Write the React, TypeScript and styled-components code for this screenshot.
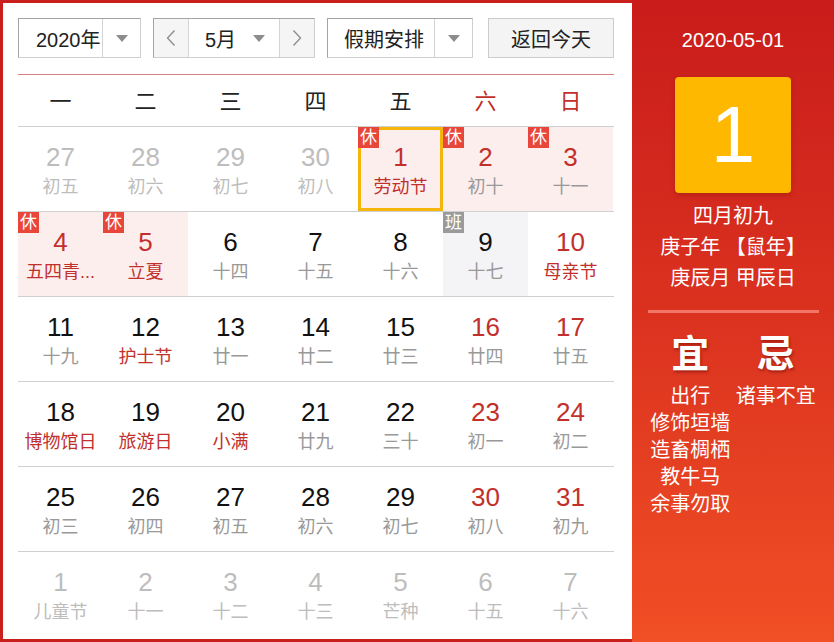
import React from "react";
import styled, { createGlobalStyle, css } from "styled-components";

const GlobalStyle = createGlobalStyle`
  html, body {
    margin: 0;
    padding: 0;
    background: #fff;
  }
  body {
    font-family: "Liberation Sans", "Noto Sans CJK SC", sans-serif;
  }
`;

const Frame = styled.div`
  width: 834px;
  height: 642px;
  box-sizing: border-box;
  padding: 3px 0 3px 3px;
  background: #c9201e;
  display: flex;
`;

const Main = styled.div`
  width: 629px;
  background: #fff;
  box-sizing: border-box;
  padding: 15px 18px 0 15px;
  display: flex;
  flex-direction: column;
`;

const Toolbar = styled.div`
  height: 40px;
  display: flex;
  align-items: stretch;
`;

const SelectBox = styled.div<{ $width: number; $gap?: number }>`
  width: ${(p) => p.$width}px;
  margin-right: ${(p) => p.$gap ?? 0}px;
  box-sizing: border-box;
  border: 1px solid #cfcfcf;
  border-top-color: #a4a4a4;
  border-left-color: #a4a4a4;
  background: #fff;
  display: flex;
  align-items: stretch;
  font-size: 20px;
  color: #222;
`;

const SelectLabel = styled.div<{ $pad: number }>`
  flex: 1;
  display: flex;
  align-items: center;
  padding-left: ${(p) => p.$pad}px;
  white-space: nowrap;
`;

const ArrowCell = styled.div<{ $width: number }>`
  width: ${(p) => p.$width}px;
  border-left: 1px solid #d4d4d4;
  display: flex;
  align-items: center;
  justify-content: center;
`;

const Caret = styled.span`
  width: 0;
  height: 0;
  border-left: 6px solid transparent;
  border-right: 6px solid transparent;
  border-top: 7px solid #8c8c8c;
`;

const StepButton = styled.div<{ $side: "left" | "right" }>`
  width: 34px;
  background: #f5f5f5;
  display: flex;
  align-items: center;
  justify-content: center;
  ${(p) =>
    p.$side === "left"
      ? css`border-right: 1px solid #d4d4d4;`
      : css`border-left: 1px solid #d4d4d4;`}
`;

const MonthLabel = styled.div`
  flex: 1;
  display: flex;
  align-items: center;
  justify-content: space-between;
  padding: 0 14px 0 16px;
`;

const TodayButton = styled.div`
  width: 126px;
  box-sizing: border-box;
  border: 1px solid #cccccc;
  background: #f4f4f4;
  display: flex;
  align-items: center;
  justify-content: center;
  font-size: 20px;
  color: #222;
`;

const Week = styled.div`
  margin-top: 16px;
  border-top: 1px solid #d98080;
  height: 53px;
  padding-bottom: 3px;
  box-sizing: border-box;
  border-bottom: 1px solid #d0d0d0;
  display: grid;
  grid-template-columns: repeat(7, 85px);
  align-items: center;
`;

const WeekDay = styled.div<{ $weekend?: boolean }>`
  text-align: center;
  font-size: 22px;
  color: ${(p) => (p.$weekend ? "#c2302c" : "#222")};
`;

const Row = styled.div<{ $last?: boolean }>`
  display: grid;
  grid-template-columns: repeat(7, 85px);
  height: 85px;
  box-sizing: border-box;
  border-bottom: ${(p) => (p.$last ? "none" : "1px solid #d0d0d0")};
`;

type Kind = "other" | "normal";

const Cell = styled.div<{ $bg?: string; $selected?: boolean }>`
  position: relative;
  box-sizing: border-box;
  background: ${(p) => p.$bg ?? "transparent"};
  display: flex;
  flex-direction: column;
  align-items: center;
  padding-top: 15px;
  ${(p) =>
    p.$selected &&
    css`
      border: 3px solid #f6b50a;
      padding-top: 12px;
    `}
`;

const Num = styled.div<{ $color: string }>`
  font-size: 26px;
  line-height: 30px;
  color: ${(p) => p.$color};
`;

const Lunar = styled.div<{ $color: string }>`
  margin-top: 3px;
  font-size: 18px;
  line-height: 25px;
  color: ${(p) => p.$color};
  white-space: nowrap;
`;

const Badge = styled.div<{ $color: string; $inset?: boolean }>`
  position: absolute;
  top: ${(p) => (p.$inset ? -3 : 0)}px;
  left: ${(p) => (p.$inset ? -3 : 0)}px;
  width: 21px;
  height: 21px;
  background: ${(p) => p.$color};
  color: #fff;
  font-size: 17px;
  line-height: 21px;
  text-align: center;
`;

const Side = styled.div`
  flex: 1;
  margin-top: -3px;
  margin-bottom: -3px;
  background: linear-gradient(180deg, #c91c1b 0%, #d9301f 45%, #f14f25 100%);
  color: #fff;
  display: flex;
  flex-direction: column;
  align-items: center;
  padding-top: 28px;
`;

const DateTitle = styled.div`
  font-size: 20px;
  line-height: 24px;
`;

const DayBox = styled.div`
  margin-top: 25px;
  width: 116px;
  height: 116px;
  border-radius: 4px;
  background: #ffb800;
  box-shadow: 0 2px 5px rgba(120, 20, 0, 0.35);
  display: flex;
  align-items: center;
  justify-content: center;
  font-size: 80px;
  line-height: 1;
`;

const LunarLine = styled.div<{ $first?: boolean }>`
  font-size: 20px;
  line-height: 31px;
  margin-top: ${(p) => (p.$first ? 8 : 0)}px;
  white-space: nowrap;
`;

const Divider = styled.div`
  margin-top: 16px;
  width: 171px;
  height: 3px;
  background: #f27666;
`;

const Almanac = styled.div`
  margin-top: 15px;
  width: 171px;
  display: grid;
  grid-template-columns: 1fr 1fr;
`;

const Column = styled.div`
  display: flex;
  flex-direction: column;
  align-items: center;
`;

const Big = styled.div`
  font-size: 38px;
  font-weight: bold;
  line-height: 52px;
  text-shadow: 1px 2px 3px rgba(90, 0, 0, 0.45);
  margin-bottom: 3px;
`;

const Item = styled.div`
  font-size: 20px;
  line-height: 27px;
  white-space: nowrap;
`;

type Day = {
  d: number;
  l: string;
  kind?: Kind;
  fest?: boolean;
  rest?: boolean;
  work?: boolean;
  sel?: boolean;
};

const weeks: Day[][] = [
  [
    { d: 27, l: "初五", kind: "other" },
    { d: 28, l: "初六", kind: "other" },
    { d: 29, l: "初七", kind: "other" },
    { d: 30, l: "初八", kind: "other" },
    { d: 1, l: "劳动节", fest: true, rest: true, sel: true },
    { d: 2, l: "初十", rest: true },
    { d: 3, l: "十一", rest: true },
  ],
  [
    { d: 4, l: "五四青...", fest: true, rest: true },
    { d: 5, l: "立夏", fest: true, rest: true },
    { d: 6, l: "十四" },
    { d: 7, l: "十五" },
    { d: 8, l: "十六" },
    { d: 9, l: "十七", work: true },
    { d: 10, l: "母亲节", fest: true },
  ],
  [
    { d: 11, l: "十九" },
    { d: 12, l: "护士节", fest: true },
    { d: 13, l: "廿一" },
    { d: 14, l: "廿二" },
    { d: 15, l: "廿三" },
    { d: 16, l: "廿四" },
    { d: 17, l: "廿五" },
  ],
  [
    { d: 18, l: "博物馆日", fest: true },
    { d: 19, l: "旅游日", fest: true },
    { d: 20, l: "小满", fest: true },
    { d: 21, l: "廿九" },
    { d: 22, l: "三十" },
    { d: 23, l: "初一" },
    { d: 24, l: "初二" },
  ],
  [
    { d: 25, l: "初三" },
    { d: 26, l: "初四" },
    { d: 27, l: "初五" },
    { d: 28, l: "初六" },
    { d: 29, l: "初七" },
    { d: 30, l: "初八" },
    { d: 31, l: "初九" },
  ],
  [
    { d: 1, l: "儿童节", kind: "other" },
    { d: 2, l: "十一", kind: "other" },
    { d: 3, l: "十二", kind: "other" },
    { d: 4, l: "十三", kind: "other" },
    { d: 5, l: "芒种", kind: "other" },
    { d: 6, l: "十五", kind: "other" },
    { d: 7, l: "十六", kind: "other" },
  ],
];

const RED = "#c2302c";

function DayCell({ day, col }: { day: Day; col: number }) {
  const other = day.kind === "other";
  const weekend = col >= 5;
  const numColor = other ? "#bdbdbd" : day.rest || (weekend && !day.work) ? RED : "#111";
  const lunarColor = other ? "#bdbdbd" : day.fest ? RED : "#999";
  const bg = day.rest ? "#fdeeee" : day.work ? "#f4f4f6" : undefined;

  return (
    <Cell $bg={bg} $selected={day.sel}>
      {day.rest && (
        <Badge $color="#e8463a" $inset={day.sel}>
          休
        </Badge>
      )}
      {day.work && <Badge $color="#9a9a9a">班</Badge>}
      <Num $color={numColor}>{day.d}</Num>
      <Lunar $color={lunarColor}>{day.l}</Lunar>
    </Cell>
  );
}

const Chevron = ({ dir }: { dir: "left" | "right" }) => (
  <svg width="10" height="18" viewBox="0 0 10 18">
    <path
      d={dir === "left" ? "M8.5 1.5 L1.5 9 L8.5 16.5" : "M1.5 1.5 L8.5 9 L1.5 16.5"}
      fill="none"
      stroke="#8a8a8a"
      strokeWidth="1.3"
    />
  </svg>
);

export default function App() {
  const weekdays = ["一", "二", "三", "四", "五", "六", "日"];
  const good = ["出行", "修饰垣墙", "造畜椆栖", "教牛马", "余事勿取"];
  const bad = ["诸事不宜"];

  return (
    <>
      <GlobalStyle />
      <Frame>
        <Main>
          <Toolbar>
            <SelectBox $width={123} $gap={12}>
              <SelectLabel $pad={17}>2020年</SelectLabel>
              <ArrowCell $width={37}>
                <Caret />
              </ArrowCell>
            </SelectBox>
            <SelectBox $width={162} $gap={12}>
              <StepButton $side="left">
                <Chevron dir="left" />
              </StepButton>
              <MonthLabel>
                <span>5月</span>
                <Caret />
              </MonthLabel>
              <StepButton $side="right">
                <Chevron dir="right" />
              </StepButton>
            </SelectBox>
            <SelectBox $width={146} $gap={15}>
              <SelectLabel $pad={16}>假期安排</SelectLabel>
              <ArrowCell $width={37}>
                <Caret />
              </ArrowCell>
            </SelectBox>
            <TodayButton>返回今天</TodayButton>
          </Toolbar>

          <Week>
            {weekdays.map((w, i) => (
              <WeekDay key={w} $weekend={i >= 5}>
                {w}
              </WeekDay>
            ))}
          </Week>

          {weeks.map((row, r) => (
            <Row key={r} $last={r === weeks.length - 1}>
              {row.map((day, c) => (
                <DayCell key={c} day={day} col={c} />
              ))}
            </Row>
          ))}
        </Main>

        <Side>
          <DateTitle>2020-05-01</DateTitle>
          <DayBox>1</DayBox>
          <LunarLine $first>四月初九</LunarLine>
          <LunarLine>庚子年 【鼠年】</LunarLine>
          <LunarLine>庚辰月 甲辰日</LunarLine>
          <Divider />
          <Almanac>
            <Column>
              <Big>宜</Big>
              {good.map((g) => (
                <Item key={g}>{g}</Item>
              ))}
            </Column>
            <Column>
              <Big>忌</Big>
              {bad.map((b) => (
                <Item key={b}>{b}</Item>
              ))}
            </Column>
          </Almanac>
        </Side>
      </Frame>
    </>
  );
}
